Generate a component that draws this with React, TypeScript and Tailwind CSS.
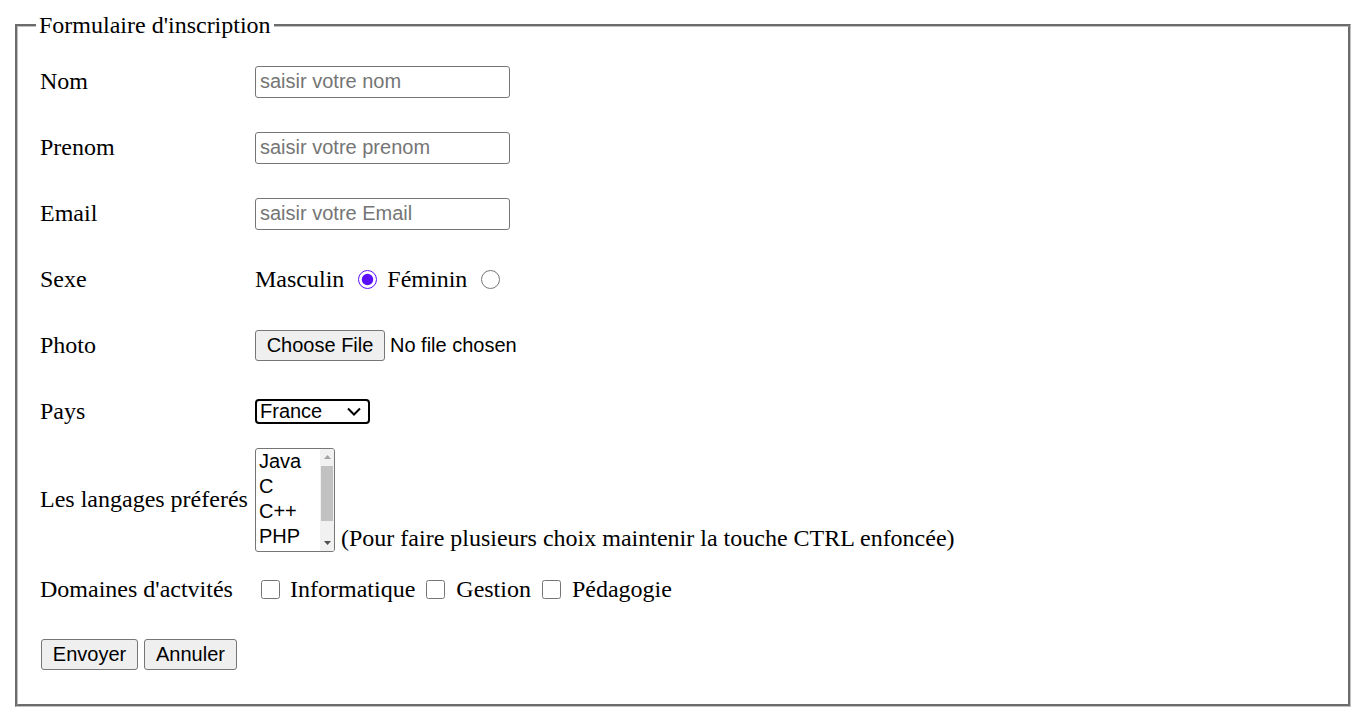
import React from "react";

function Row({ label, className, children }: { label: string; className: string; children: React.ReactNode }) {
  return (
    <div className={`flex items-center ${className}`}>
      <div className="w-[219px] shrink-0 pl-[4px]">{label}</div>
      <div className="flex items-center">{children}</div>
    </div>
  );
}

function TextField({ placeholder }: { placeholder: string }) {
  return (
    <input
      type="text"
      placeholder={placeholder}
      className="h-[32px] w-[255px] rounded-[3px] border border-[#767676] bg-white px-[4px] font-['Liberation_Sans',Arial,sans-serif] text-[20px] text-black outline-none placeholder:text-[#757575]"
    />
  );
}

export default function App() {
  const langages = ["Java", "C", "C++", "PHP"];

  return (
    <div className="h-screen overflow-hidden bg-white px-[12px] pt-[12px] font-['Liberation_Serif','Times_New_Roman',serif] text-[24px] leading-[1.15] text-black">
      <fieldset className="mx-[3px] border-[3px] border-[#c0c0c0] px-[18px] pt-[9px] pb-[34px] [border-style:groove]">
        <legend className="px-[3px]">Formulaire d'inscription</legend>

        {/* Champs texte */}
        <Row label="Nom" className="h-[66px]">
          <TextField placeholder="saisir votre nom" />
        </Row>
        <Row label="Prenom" className="h-[66px]">
          <TextField placeholder="saisir votre prenom" />
        </Row>
        <Row label="Email" className="h-[66px]">
          <TextField placeholder="saisir votre Email" />
        </Row>

        {/* Sexe */}
        <Row label="Sexe" className="h-[66px]">
          <span>Masculin</span>
          <input type="radio" name="sexe" defaultChecked className="ml-[14px] h-[19px] w-[19px] accent-[#5a0fff]" />
          <span className="ml-[10px]">Féminin</span>
          <input type="radio" name="sexe" className="ml-[14px] h-[19px] w-[19px] accent-[#5a0fff]" />
        </Row>

        {/* Photo */}
        <Row label="Photo" className="h-[66px]">
          <button className="h-[31px] w-[130px] rounded-[3px] border border-[#767676] bg-[#efefef] font-['Liberation_Sans',Arial,sans-serif] text-[20px]">
            Choose File
          </button>
          <span className="ml-[5px] font-['Liberation_Sans',Arial,sans-serif] text-[20px]">No file chosen</span>
        </Row>

        {/* Pays */}
        <Row label="Pays" className="h-[66px]">
          <div className="flex h-[25px] w-[115px] items-center justify-between rounded-[4px] border-2 border-black pl-[3px] pr-[7px] font-['Liberation_Sans',Arial,sans-serif] text-[20px]">
            <span>France</span>
            <svg width="14" height="9" viewBox="0 0 14 9" fill="none">
              <path d="M1 1.5 L7 7.5 L13 1.5" stroke="black" strokeWidth="2" />
            </svg>
          </div>
        </Row>

        {/* Langages */}
        <Row label="Les langages préferés" className="h-[110px]">
          <div className="flex items-end">
            <div className="flex h-[104px] w-[80px] overflow-hidden rounded-[3px] border border-[#767676] bg-white font-['Liberation_Sans',Arial,sans-serif] text-[20px]">
              <div className="flex-1 pl-[3px] leading-[25px]">
                {langages.map((l) => (
                  <div key={l} className="whitespace-nowrap">
                    {l}
                  </div>
                ))}
              </div>
              <div className="flex w-[14px] flex-col items-center bg-[#f1f1f1] py-[1px]">
                <div className="flex h-[14px] items-center">
                  <svg width="7" height="4" viewBox="0 0 7 4">
                    <path d="M0 4 L3.5 0 L7 4 Z" fill="#a3a3a3" />
                  </svg>
                </div>
                <div className="mt-[2px] h-[55px] w-[12px] bg-[#c1c1c1]" />
                <div className="flex-1" />
                <div className="flex h-[14px] items-center">
                  <svg width="7" height="4" viewBox="0 0 7 4">
                    <path d="M0 0 L3.5 4 L7 0 Z" fill="#505050" />
                  </svg>
                </div>
              </div>
            </div>
            <span className="ml-[6px] leading-[27px]">(Pour faire plusieurs choix maintenir la touche CTRL enfoncée)</span>
          </div>
        </Row>

        {/* Domaines */}
        <Row label="Domaines d'actvités" className="h-[70px]">
          <input type="checkbox" className="ml-[6px] h-[19px] w-[19px]" />
          <span className="ml-[10px]">Informatique</span>
          <input type="checkbox" className="ml-[11px] h-[19px] w-[19px]" />
          <span className="ml-[11px]">Gestion</span>
          <input type="checkbox" className="ml-[11px] h-[19px] w-[19px]" />
          <span className="ml-[11px]">Pédagogie</span>
        </Row>

        {/* Boutons */}
        <div className="flex gap-[6px] pl-[5px] pt-[14px] font-['Liberation_Sans',Arial,sans-serif] text-[20px]">
          <button className="h-[31px] w-[97px] rounded-[3px] border border-[#767676] bg-[#efefef]">Envoyer</button>
          <button className="h-[31px] w-[93px] rounded-[3px] border border-[#767676] bg-[#efefef]">Annuler</button>
        </div>
      </fieldset>
    </div>
  );
}
